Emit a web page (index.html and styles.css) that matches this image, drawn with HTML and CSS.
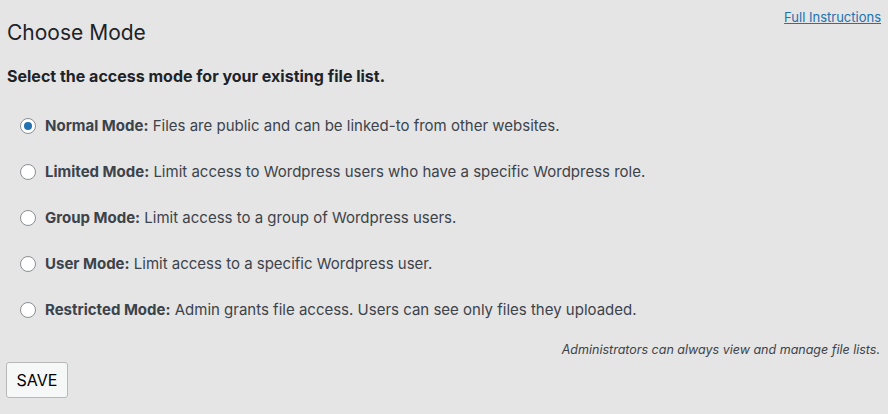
FILE: index.html
```html
<!DOCTYPE html>
<html>
<head>
<meta charset="utf-8">
<link rel="stylesheet" href="styles.css">
</head>
<body>
<div class="wrap">
  <div class="top">
    <h2 class="title">Choose Mode</h2>
    <a class="help" href="#">Full Instructions</a>
  </div>
  <h3 class="sub">Select the access mode for your existing file list.</h3>
  <ul class="modes">
    <li><label><input type="radio" name="mode" checked><span class="dot on"></span><span><b>Normal Mode:</b> Files are public and can be linked-to from other websites.</span></label></li>
    <li><label><input type="radio" name="mode"><span class="dot"></span><span><b>Limited Mode:</b> Limit access to Wordpress users who have a specific Wordpress role.</span></label></li>
    <li><label><input type="radio" name="mode"><span class="dot"></span><span><b>Group Mode:</b> Limit access to a group of Wordpress users.</span></label></li>
    <li><label><input type="radio" name="mode"><span class="dot"></span><span><b>User Mode:</b> Limit access to a specific Wordpress user.</span></label></li>
    <li><label><input type="radio" name="mode"><span class="dot"></span><span><b>Restricted Mode:</b> Admin grants file access. Users can see only files they uploaded.</span></label></li>
  </ul>
  <p class="note">Administrators can always view and manage file lists.</p>
  <button class="save" type="button">SAVE</button>
</div>
</body>
</html>
```
FILE: styles.css
```css
html, body {
  margin: 0;
  padding: 0;
  background: #e5e5e5;
}
body {
  font-family: Inter, "Liberation Sans", Arial, sans-serif;
  color: #3c434a;
  font-size: 15px;
}
.wrap {
  padding: 0 7px 0 7px;
}
.top {
  display: flex;
  justify-content: space-between;
  align-items: flex-start;
}
.title {
  margin: 20px 0 0 0;
  font-size: 21px;
  font-weight: 400;
  line-height: 26px;
  color: #1d2327;
}
.help {
  margin-top: 9px;
  font-size: 13px;
  color: #2271b1;
  text-decoration: underline;
  line-height: 16px;
}
.sub {
  margin: 20px 0 0 0;
  font-size: 16px;
  line-height: 20px;
  font-weight: 700;
  color: #1d2327;
}
.modes {
  list-style: none;
  margin: 30px 0 0 0;
  padding: 0 0 0 13px;
  display: flex;
  flex-direction: column;
  gap: 26px;
}
.modes label {
  display: flex;
  align-items: center;
  gap: 9px;
  line-height: 20px;
}
.modes input {
  display: none;
}
.modes b {
  font-weight: 700;
}
.dot {
  width: 16px;
  height: 16px;
  box-sizing: border-box;
  border: 1px solid #8c8f94;
  border-radius: 50%;
  background: #fff;
  display: flex;
  align-items: center;
  justify-content: center;
  flex: none;
}
.dot.on::after {
  content: "";
  width: 8px;
  height: 8px;
  border-radius: 50%;
  background: #2271b1;
}
.note {
  margin: 22px 1px 0 0;
  text-align: right;
  font-style: italic;
  font-size: 12.5px;
  line-height: 16px;
  color: #3c434a;
}
.save {
  margin: 4px 0 0 -1px;
  font-family: Inter, "Liberation Sans", Arial, sans-serif;
  font-size: 16px;
  color: #000;
  background: #f6f7f7;
  border: 1px solid #b8b8b8;
  border-radius: 3px;
  width: 62px;
  height: 36px;
  padding: 0;
}
```
